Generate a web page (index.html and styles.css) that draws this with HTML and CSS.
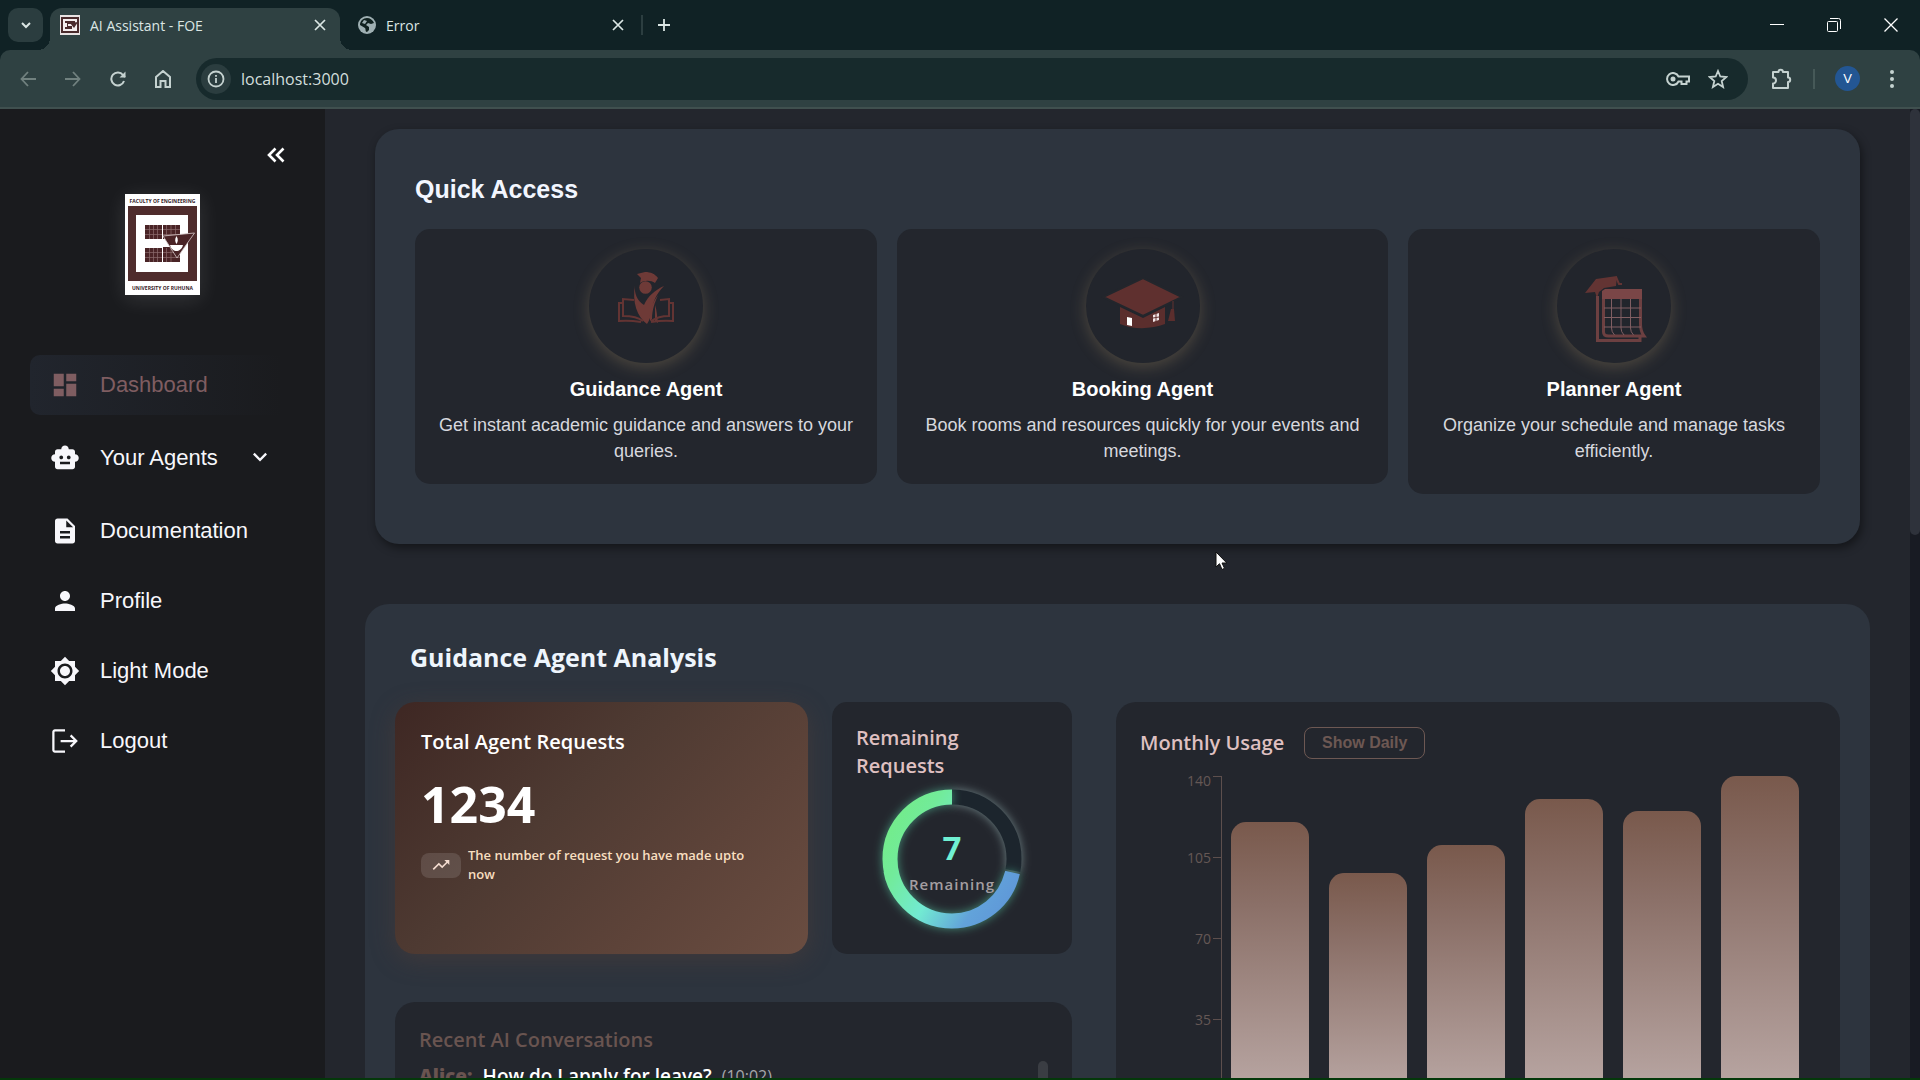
FILE: index.html
```html
<!DOCTYPE html>
<html lang="en">
<head>
<meta charset="utf-8">
<title>AI Assistant - FOE</title>
<link rel="stylesheet" href="styles.css">
</head>
<body>
<div class="window">
  <header class="tabstrip">
    <button class="tab-search" aria-label="Search tabs"><svg width="12" height="12" viewBox="0 0 12 12"><path d="M2 4l4 4 4-4" fill="none" stroke="currentColor" stroke-width="2"/></svg></button>
    <div class="tab tab-active">
      <svg class="favicon" width="20" height="20" viewBox="0 0 20 20"><path fill="#e8e2e2" d="M0 0h20v20H0z"/><path fill="#4a2a2c" d="M1 2h18v16H1z"/><path fill="#f4eeee" d="M3 4h14v12H3z"/><path fill="#4a2a2c" d="M5 6h10v3H8v2h4v3H5v-2h2V8H5z"/><path fill="#4a2a2c" d="M10 8l8-1-4 6z"/></svg>
      <span class="tab-title">AI Assistant - FOE</span>
      <button class="tab-close" aria-label="Close tab"><svg width="12" height="12" viewBox="0 0 12 12"><path d="M1 1l10 10M11 1L1 11" stroke="currentColor" stroke-width="1.700"/></svg></button>
    </div>
    <div class="tab">
      <svg class="favicon" width="18" height="18" viewBox="0 0 18 18"><circle cx="9" cy="9" r="9" fill="#9fb0b3"/><path fill="#10211f" d="M9 2c3 0 6 2 7 5l-3 1-3-1-2 2 3 2v3l-2 2c-2 0-1-3-2-4L2 9c0-4 3-7 7-7zM6 4L4 7l3 1 2-3z"/></svg>
      <span class="tab-title">Error</span>
      <button class="tab-close" aria-label="Close tab"><svg width="12" height="12" viewBox="0 0 12 12"><path d="M1 1l10 10M11 1L1 11" stroke="currentColor" stroke-width="1.700"/></svg></button>
    </div>
    <span class="tab-divider"></span>
    <button class="tab-new" aria-label="New tab"><svg width="14" height="14" viewBox="0 0 14 14"><path d="M7 1v12M1 7h12" stroke="currentColor" stroke-width="1.800"/></svg></button>
    <div class="window-controls">
      <button aria-label="Minimize"><svg width="14" height="14" viewBox="0 0 14 14"><path d="M0 6.500h14" stroke="currentColor"/></svg></button>
      <button aria-label="Restore"><svg width="14" height="14" viewBox="0 0 14 14" fill="none" stroke="currentColor"><rect x=".5" y="3.500" width="10" height="10" rx="1"/><path d="M3 .5h8.500a2 2 0 0 1 2 2V11"/></svg></button>
      <button aria-label="Close"><svg width="14" height="14" viewBox="0 0 14 14"><path d="M.5 .5l13 13M13.500 .5l-13 13" stroke="currentColor" stroke-width="1.300"/></svg></button>
    </div>
  </header>

  <nav class="toolbar" aria-label="Browser toolbar">
    <button class="tool tool-off" aria-label="Back"><svg width="16" height="16" viewBox="0 0 16 16"><path d="M16 8H2M8 1L1.500 8 8 15" fill="none" stroke="currentColor" stroke-width="1.800"/></svg></button>
    <button class="tool tool-off" aria-label="Forward"><svg width="16" height="16" viewBox="0 0 16 16"><path d="M0 8h14M8 1l6.500 7L8 15" fill="none" stroke="currentColor" stroke-width="1.800"/></svg></button>
    <button class="tool" aria-label="Reload"><svg width="16" height="16" viewBox="0 0 16 16"><path d="M14 10a6.500 6.500 0 1 1-1-6l2 2" fill="none" stroke="currentColor" stroke-width="2"/><path d="M15.500 .5v6h-6z" fill="currentColor"/></svg></button>
    <button class="tool" aria-label="Home"><svg width="16" height="18" viewBox="0 0 16 18"><path d="M1 7l7-6 7 6v10h-4.500v-6h-5v6H1z" fill="none" stroke="currentColor" stroke-width="2"/></svg></button>
    <div class="omnibox">
      <button class="site-info" aria-label="Site information"><svg width="18" height="18" viewBox="0 0 18 18"><circle cx="9" cy="9" r="7.500" fill="none" stroke="currentColor" stroke-width="1.800"/><path d="M9 8v5M9 5v1.800" stroke="currentColor" stroke-width="1.800"/></svg></button>
      <input class="address" type="text" value="localhost:3000" aria-label="Address">
      <button class="omni-button" aria-label="Passwords"><svg width="24" height="14" viewBox="0 0 24 14"><path d="M12.500 4.500a6 6 0 1 0 0 5h3V12h5V9.500H23v-5z" fill="none" stroke="currentColor" stroke-width="2"/><circle cx="7" cy="7" r="2.500" fill="currentColor"/></svg></button>
      <button class="omni-button" aria-label="Bookmark"><svg width="20" height="20" viewBox="0 0 20 20"><path d="M10 2l2.300 5.500 6 .5-4.600 4 1.400 6-5.100-3.200L4.900 18l1.400-6L1.700 8l6-.5z" fill="none" stroke="currentColor" stroke-width="1.800"/></svg></button>
    </div>
    <button class="extensions" aria-label="Extensions"><svg width="22" height="22" viewBox="0 0 22 22"><path d="M2 4h5.500a2.200 2.200 0 0 1 4.400 0H17v5.500a2.200 2.200 0 0 1 0 4.400V20H2v-4.500a3 3 0 0 0 0-6z" fill="none" stroke="currentColor" stroke-width="2" stroke-linejoin="round"/></svg></button>
    <span class="tool-divider"></span>
    <button class="avatar" aria-label="Profile V">V</button>
    <button class="browser-menu" aria-label="Menu"><svg width="4" height="18" viewBox="0 0 4 18" fill="currentColor"><circle cx="2" cy="2" r="2"/><circle cx="2" cy="9" r="2"/><circle cx="2" cy="16" r="2"/></svg></button>
  </nav>

  <div class="app">
    <aside class="sidebar">
      <button class="collapse" aria-label="Collapse sidebar"><svg width="18" height="18" viewBox="0 0 18 18"><path d="M8.500 2.500L2 9l6.500 6.500M16.500 2.500L10 9l6.500 6.500" fill="none" stroke="currentColor" stroke-width="2.600"/></svg></button>
      <svg class="logo" width="75" height="101" viewBox="0 0 75 101" role="img" aria-label="Faculty of Engineering, University of Ruhuna">
        <path fill="#fff" d="M0 0h75v101H0z"/>
        <text class="logo-text" x="37.500" y="9" text-anchor="middle">FACULTY OF ENGINEERING</text>
        <text class="logo-text" x="37.500" y="96" text-anchor="middle">UNIVERSITY OF RUHUNA</text>
        <path fill="#4f2c2c" d="M3 12h69v75H3z"/>
        <path fill="#fff" d="M11 21h52v57H11z"/>
        <path fill="#4a2426" d="M20 31h35v14H37v8h18v15H20V54h17v-9H20z"/>
        <path fill="#fff" d="M20 45h17v9H20z"/>
        <path d="M20 35.500h35M20 40.500h35M20 58.500h35M20 63.500h35M24.500 31v14M28.500 31v14M32.500 31v14M41.500 31v14M46 31v14M50.500 31v14M24.500 54v14M28.500 54v14M32.500 54v14M41.500 54v14M46 54v14" stroke="#8d6d6e" stroke-width=".7"/>
        <path d="M37.500 31v37" stroke="#fff"/>
        <path fill="#4a2426" stroke="#d8cccc" stroke-width=".8" d="M38 42l31.500-3L52 64z"/>
        <path fill="#fff" d="M45 51h13c-1 4-4 6-6.500 6S46 55 45 51zM51.500 42c2 3 1.500 6 0 8-1.500-2-2-5 0-8z"/>
      </svg>
      <nav class="menu" aria-label="Main">
        <a class="menu-item menu-current" href="#"><svg class="icon" viewBox="0 0 24 24"><path d="M3 13h8V3H3v10zm0 8h8v-6H3v6zm10 0h8V11h-8v10zm0-18v6h8V3h-8z"/></svg><span>Dashboard</span></a>
        <button class="menu-item menu-group"><svg class="icon" viewBox="0 0 24 24"><path d="M20 9V7c0-1.100-.9-2-2-2h-3c0-1.660-1.340-3-3-3S9 3.340 9 5H6c-1.100 0-2 .9-2 2v2c-1.660 0-3 1.340-3 3s1.340 3 3 3v4c0 1.100.9 2 2 2h12c1.100 0 2-.9 2-2v-4c1.660 0 3-1.340 3-3s-1.340-3-3-3zM7.500 11.500c0-.83.67-1.500 1.500-1.500s1.500.67 1.500 1.500S9.830 13 9 13s-1.500-.67-1.500-1.500zM16 17H8v-2h8v2zm-1-4c-.83 0-1.500-.67-1.500-1.500S14.170 10 15 10s1.500.67 1.500 1.500S15.830 13 15 13z"/></svg><span>Your Agents</span><svg class="chevron" viewBox="0 0 24 24"><path d="M16.590 7.590L12 12.170 7.410 7.590 6 9l6 6 6-6z"/></svg></button>
        <a class="menu-item" href="#"><svg class="icon" viewBox="0 0 24 24"><path d="M14 2H6c-1.100 0-1.990.9-1.990 2L4 20c0 1.100.89 2 1.990 2H18c1.100 0 2-.9 2-2V8l-6-6zm2 16H8v-2h8v2zm0-4H8v-2h8v2zm-3-5V3.500L18.500 9H13z"/></svg><span>Documentation</span></a>
        <a class="menu-item" href="#"><svg class="icon" viewBox="0 0 24 24"><path d="M12 12c2.210 0 4-1.790 4-4s-1.790-4-4-4-4 1.790-4 4 1.790 4 4 4zm0 2c-2.670 0-8 1.340-8 4v2h16v-2c0-2.660-5.330-4-8-4z"/></svg><span>Profile</span></a>
        <button class="menu-item"><svg class="icon" viewBox="0 0 24 24"><path d="M20 8.690V4h-4.690L12 .69 8.690 4H4v4.690L.69 12 4 15.310V20h4.690L12 23.310 15.310 20H20v-4.690L23.310 12 20 8.690zM12 18c-3.310 0-6-2.690-6-6s2.690-6 6-6 6 2.690 6 6-2.690 6-6 6zm0-10c-2.210 0-4 1.790-4 4s1.790 4 4 4 4-1.790 4-4-1.790-4-4-4z"/></svg><span>Light Mode</span></button>
        <button class="menu-item"><svg class="icon" viewBox="0 0 24 24"><path d="M12 3.500H4A1.300 1.300 0 0 0 2.700 5v14A1.300 1.300 0 0 0 4 20.500h8M8.500 12h12M16.500 7.500L21 12l-4.500 4.500" fill="none" stroke="currentColor" stroke-width="1.800"/></svg><span>Logout</span></button>
      </nav>
    </aside>

    <main class="content">
      <section class="panel quick">
        <h2 class="quick-title">Quick Access</h2>
        <div class="agents">
          <article class="agent">
            <svg class="agent-icon" viewBox="0 0 114 114">
              <g fill="#6e3a37"><path d="M48 25l8-2c6 0 10 2 13 6l-3 5c-4-3-11-3-15 0l1-5z"/><circle cx="56.500" cy="38.500" r="6.300"/><path d="M46 36c-1 8 2 16 9 20 4-9 11-15 20-19-8 8-11 16-12 24-1 6-3 11-5 14C48 68 43 53 46 36z"/><path d="M69 46c-5 7-9 15-8 26l2-2c0-9 3-17 6-24z"/><path d="M66 56v16l3 2c-1-7-1-12-3-18z"/></g>
              <path fill="none" stroke="#633433" stroke-width="2" d="M45 51l-11-1v17c8 0 15 1 20 5M33 54h-3v18c9-1 16 0 22 1M71 51l9-1v17c-7 0-12 1-18 5M81 54h3v18c-9-1-16 0-22 1"/>
            </svg>
            <h3>Guidance Agent</h3>
            <p>Get instant academic guidance and answers to your queries.</p>
          </article>
          <article class="agent">
            <svg class="agent-icon" viewBox="0 0 114 114">
              <path fill="#5b2e2d" d="M34 58l23 11 22-11v17c-13 5-31 6-45 0z"/>
              <path fill="#5f302f" stroke="#23262c" stroke-width="2" d="M57 29l39 19-39 19-40-19z"/>
              <path fill="#fff" d="M41 68l5 1v8l-5-1z"/><path fill="#f0e4e6" d="M67 66l6-2v7l-6 2z"/>
              <path stroke="#633231" d="M67 69l6-1M70 64v9M87 52v10"/><path fill="#5b2e2d" d="M85 60h3l1 12h-7z"/>
            </svg>
            <h3>Booking Agent</h3>
            <p>Book rooms and resources quickly for your events and meetings.</p>
          </article>
          <article class="agent agent-tall">
            <svg class="agent-icon" viewBox="0 0 114 114">
              <path fill="#633433" d="M28 44l11-14 21-3-1 10-12 2-5 4-2 6-2-6z"/><path fill="none" stroke="#633433" stroke-width="2" d="M59 28l3 7h3"/>
              <path fill="none" stroke="#6d4041" stroke-width="3" d="M40.500 47v44.500H83V87M46.500 46v37q0 4 5 4H87c-3-4-3.500-8-3.500-12V46"/>
              <path fill="#7a4647" d="M45 42l3-2h37v10H45z"/>
              <path fill="none" stroke="#805e62" d="M54.500 50v29q0 4 3 7M64 50v29q0 4 3 7M73.500 50v29q0 4 3 7M47 59h37M47 68.500h37M47 78h37"/>
            </svg>
            <h3>Planner Agent</h3>
            <p>Organize your schedule and manage tasks efficiently.</p>
          </article>
        </div>
      </section>

      <section class="panel analysis">
        <h2 class="analysis-title">Guidance Agent Analysis</h2>
        <div class="analysis-grid">
          <div class="analysis-left">
            <div class="stats">
              <article class="card total">
                <h3>Total Agent Requests</h3>
                <strong>1234</strong>
                <div class="total-note">
                  <span class="trend"><svg width="20" height="20" viewBox="0 0 24 24" fill="currentColor"><path d="M16 6l2.290 2.290-4.880 4.880-4-4L2 16.590 3.410 18l6-6 4 4 6.300-6.290L22 12V6z"/></svg></span>
                  <p>The number of request you have made upto now</p>
                </div>
              </article>
              <article class="card remaining">
                <h3>Remaining Requests</h3>
                <div class="donut">
                  <svg width="140" height="140" viewBox="0 0 140 140">
                    <defs><linearGradient id="ring" x1=".8" y1="0" x2=".2" y2="1"><stop offset="0" stop-color="#73ec8b"/><stop offset=".2" stop-color="#72eb9a"/><stop offset=".5" stop-color="#72ead2"/><stop offset=".8" stop-color="#62a3da"/><stop offset="1" stop-color="#5f98d8"/></linearGradient></defs>
                    <circle class="ring-rest" cx="70" cy="70" r="62" pathLength="100" stroke-dasharray="28 72"/>
                    <circle class="ring-used" cx="70" cy="70" r="62" pathLength="100" stroke="url(#ring)" stroke-dasharray="71.500 28.500" stroke-dashoffset="-28.500"/>
                  </svg>
                  <div class="donut-label"><b>7</b><span>Remaining</span></div>
                </div>
              </article>
            </div>
            <article class="card recent">
              <h3>Recent AI Conversations</h3>
              <p class="message"><b>Alice:</b><span>How do I apply for leave?</span><time>(10:02)</time></p>
              <span class="recent-thumb"></span>
            </article>
          </div>
          <article class="card usage">
            <div class="usage-head"><h3>Monthly Usage</h3><button class="toggle">Show Daily</button></div>
            <div class="chart">
              <ul class="axis"><li>140</li><li>105</li><li>70</li><li>35</li></ul>
              <div class="bars">
                <span class="bar" style="height:279px"></span>
                <span class="bar" style="height:228px"></span>
                <span class="bar" style="height:256px"></span>
                <span class="bar" style="height:302px"></span>
                <span class="bar" style="height:290px"></span>
                <span class="bar" style="height:325px"></span>
              </div>
            </div>
          </article>
        </div>
      </section>
    </main>
    <div class="scrollbar"><span class="scrollbar-thumb"></span></div>
  </div>
</div>
<svg class="cursor" width="13" height="20" viewBox="0 0 13 20"><path d="M1 1v15l3.500-3.300L7 18.500l2.500-1.200L7 12h4.800z" fill="#fff" stroke="#111" stroke-width="1"/></svg>
</body>
</html>
```
FILE: styles.css
```css
* { box-sizing: border-box; }
body, h2, h3, p, ul { margin: 0; padding: 0; }
body {
  height: 100vh;
  overflow: hidden;
  background: #23262d;
  color: #fff;
  font-family: "Liberation Sans", Arial, sans-serif;
}
button { padding: 0; border: 0; background: none; color: inherit; font: inherit; cursor: pointer; }
a { color: inherit; text-decoration: none; }
svg { display: block; flex: none; }

.window { display: flex; flex-direction: column; height: 100vh; border-bottom: 2px solid #04380a; background: #102225; }

/* Browser frame */
.tabstrip {
  display: flex;
  align-items: center;
  flex: none;
  height: 50px;
  padding: 8px 15px 0 8px;
  color: #dbe6e4;
  font: 14px "Open Sans", "Noto Sans", sans-serif;
}
.tab-search {
  display: grid;
  place-items: center;
  width: 35px;
  height: 34px;
  margin: 0 7px 8px 0;
  border-radius: 10px;
  background: #2b3d3f;
}
.tab { display: flex; align-items: center; width: 301px; height: 42px; padding: 0 17px 8px 18px; }
.tab-active { position: relative; width: 290px; padding: 0 14px 8px 10px; border-radius: 12px 12px 0 0; background: #2f4142; }
.tab-active::before, .tab-active::after { position: absolute; bottom: 0; width: 12px; height: 12px; content: ""; }
.tab-active::before { right: 100%; background: radial-gradient(circle at 0 0, transparent 12px, #2f4142 12px); }
.tab-active::after { left: 100%; background: radial-gradient(circle at 100% 0, transparent 12px, #2f4142 12px); }
.favicon { margin-right: 10px; }
.tab-title { flex: 1; }
.tab-divider { width: 2px; height: 20px; margin: 0 14px 8px 0; background: #2c3e40; }
.tab-new { margin-bottom: 8px; }
.window-controls { display: flex; gap: 43px; margin: 0 7px 8px auto; color: #fff; }

.toolbar {
  display: flex;
  align-items: center;
  flex: none;
  height: 59px;
  padding: 0 26px 0 20px;
  border-bottom: 2px solid #40504f;
  border-radius: 10px 10px 0 0;
  background: #2f4142;
  color: #c5d2d0;
}
.tool { display: grid; place-items: center; width: 16px; margin-right: 29px; }
.tool-off { color: #71817f; }
.omnibox {
  display: flex;
  align-items: center;
  flex: 1;
  height: 42px;
  margin: 0 23px 0 -4px;
  padding: 0 20px 0 5px;
  border-radius: 21px;
  background: #172a2c;
}
.site-info { display: grid; place-items: center; width: 30px; height: 30px; border-radius: 50%; background: #2b3d3f; }
.address {
  flex: 1;
  min-width: 0;
  margin-left: 10px;
  padding: 0;
  border: 0;
  outline: 0;
  background: none;
  color: #d3dfdd;
  font: 16px "Open Sans", "Noto Sans", sans-serif;
}
.omni-button { margin-left: 18px; }
.tool-divider { width: 2px; height: 20px; margin: 0 20px; background: #465958; }
.avatar { width: 25px; height: 25px; border-radius: 50%; background: #235693; color: #fff; font-size: 13px; }
.browser-menu { margin-left: 30px; }

/* Application shell */
.app { display: flex; flex: 1; min-height: 0; }
.sidebar {
  display: flex;
  flex-direction: column;
  flex: none;
  width: 325px;
  padding: 37px 15px 0 30px;
  background: #1a1b1e;
}
.collapse { align-self: flex-end; margin-right: 25px; }
.logo { align-self: center; margin: 30px 15px 60px 0; box-shadow: 0 4px 20px rgba(255, 255, 255, .12); }
.logo-text { font: bold 5px "Open Sans", "Noto Sans", sans-serif; fill: #33201f; }
.menu { display: flex; flex-direction: column; gap: 10px; }
.menu-item {
  display: flex;
  align-items: center;
  gap: 20px;
  height: 60px;
  padding: 0 20px;
  border-radius: 10px;
  color: #f7f7fb;
  font-size: 22px;
}
.menu-group { height: 66px; }
.menu-current { background: linear-gradient(90deg, #21252d, #1a1b1e 90%); color: #7f5d61; }
.icon { width: 30px; height: 30px; fill: currentColor; }
.chevron { width: 28px; height: 28px; margin-left: 8px; fill: currentColor; }

.content { flex: 1; min-width: 0; padding: 20px 40px 40px; overflow-y: auto; scrollbar-width: none; background: #23262d; }
.scrollbar { flex: none; width: 10px; background: #181b23; }
.scrollbar-thumb { display: block; height: 44%; border-radius: 5px; background: #2e323b; }
.panel { border-radius: 24px; background: #2d343e; }

/* Quick access */
.quick { margin: 0 10px 60px; padding: 40px 40px 50px; box-shadow: 2px 4px 10px rgba(0, 0, 0, .45); }
.quick-title { margin-bottom: 20px; color: #f2f6ff; font-size: 25px; line-height: 40px; }
.agents { display: grid; grid-template-columns: 462fr 491fr 412fr; align-items: start; gap: 20px; }
.agent {
  display: flex;
  flex-direction: column;
  align-items: center;
  padding: 20px;
  border-radius: 15px;
  background: #23262d;
  text-align: center;
}
.agent-tall { padding-bottom: 30px; }
.agent-icon { width: 114px; height: 114px; border-radius: 50%; background: #22252c; box-shadow: 0 4px 16px rgba(190, 160, 110, .28); }
.agent h3 { margin: 12px 0 8px; font-size: 20px; line-height: 29px; }
.agent p { color: #d7d8de; font-size: 18px; line-height: 26px; }

/* Analysis */
.analysis { padding: 30px; font-family: "Open Sans", "Noto Sans", sans-serif; }
.analysis-title { margin: 0 15px 22px; color: #eef5fc; font-size: 25px; line-height: 46px; }
.analysis-grid { display: grid; grid-template-columns: 677fr 724fr; gap: 44px; }
.analysis-left { display: flex; flex-direction: column; gap: 48px; }
.stats { display: grid; grid-template-columns: 413fr 240fr; gap: 24px; }
.card { padding: 24px; border-radius: 20px; background: #23262d; }
.card h3 { font-size: 20px; font-weight: 600; line-height: 28px; }
.total {
  height: 252px;
  padding: 26px;
  background: linear-gradient(135deg, #3e2723, #4e3a32 40%, #5d4339 70%, #6a4d41);
  box-shadow: 0 6px 24px rgba(93, 64, 55, .4);
}
.total strong { display: block; margin: 16px 0 10px; font-size: 50px; line-height: 64px; }
.total-note { display: flex; align-items: center; gap: 7px; padding-right: 30px; }
.total-note p { color: #f8dfc0; font-size: 13px; font-weight: 600; line-height: 19px; }
.trend { display: grid; place-items: center; flex: none; width: 40px; height: 25px; border-radius: 8px; background: rgba(255, 255, 255, .12); color: #f4dcd0; }
.remaining { height: 252px; padding: 22px 24px; border-radius: 15px; }
.remaining h3, .usage h3 { color: #dfc0c1; }
.donut { position: relative; width: 140px; margin: 9px auto 0; }
.donut svg { overflow: visible; }
.donut circle { fill: none; stroke-width: 15px; transform: rotate(-90deg); transform-origin: 70px 70px; }
.ring-rest { stroke: #1c252d; filter: drop-shadow(0 0 5px rgba(160, 190, 190, .6)); }
.ring-used { filter: drop-shadow(0 0 5px rgba(100, 240, 190, .5)); }
.donut-label { position: absolute; inset: 0; display: flex; flex-direction: column; align-items: center; padding-top: 37px; }
.donut-label b { color: #70f0d2; font-size: 33px; line-height: 44px; }
.donut-label span { color: #a49ea1; font-size: 15px; font-weight: 600; letter-spacing: 1px; line-height: 28px; }
.recent { position: relative; min-height: 300px; }
.recent h3 { color: #695450; }
.message { display: flex; align-items: center; gap: 10px; margin-top: 8px; font-size: 19px; font-weight: 600; line-height: 28px; }
.message b { color: #695450; }
.message time { color: #a5a6ab; font-size: 16px; font-weight: 400; line-height: 24px; }
.recent-thumb { position: absolute; top: 59px; right: 24px; width: 10px; height: 80px; border-radius: 5px; background: #3a3d43; }
.usage-head { display: flex; align-items: center; gap: 20px; height: 34px; }
.toggle { width: 121px; height: 32px; border: 1px solid #6d5853; border-radius: 8px; color: #6d5853; font: bold 16px "Liberation Sans", Arial, sans-serif; }
.chart { display: flex; height: 325px; margin: 16px 17px 0 40px; }
.axis { width: 42px; border-right: 1px solid #5d4f4d; color: #655855; font-size: 14px; list-style: none; text-align: right; }
.axis li { position: relative; height: 81px; padding-right: 10px; line-height: 2px; }
.axis li:first-child { line-height: 9px; }
.axis li::after { position: absolute; top: 0; right: 0; width: 8px; height: 1px; background: #5d4f4d; content: ""; }
.bars { display: flex; align-items: flex-end; justify-content: space-between; flex: 1; padding-left: 9px; }
.bar { flex: 0 1 78px; border-radius: 15px 15px 0 0; background: linear-gradient(#79594c, #8b7068 30%, #bba9a6); }

/* Mouse pointer over the page */
.cursor { position: absolute; top: 551px; left: 1215px; }
```
